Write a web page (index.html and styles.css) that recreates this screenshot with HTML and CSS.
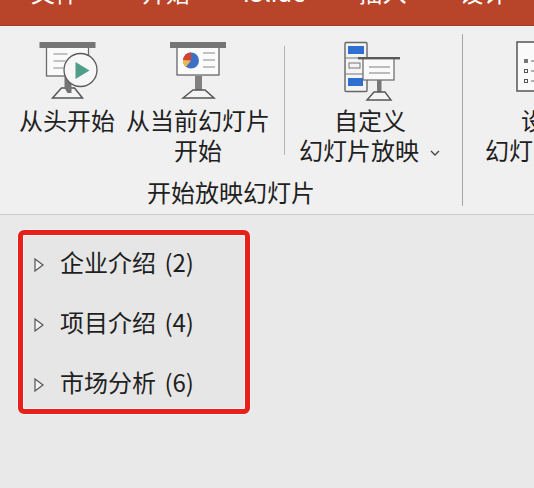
FILE: index.html
```html
<!DOCTYPE html>
<html lang="zh-CN">
<head>
<meta charset="utf-8">
<title>幻灯片放映</title>
<link rel="stylesheet" href="styles.css">
</head>
<body>
<header class="titlebar">
  <nav class="tabs">
    <span class="tab tab-first">文件</span>
    <span class="tab">开始</span>
    <span class="tab">iSlide</span>
    <span class="tab">插入</span>
    <span class="tab">设计</span>
  </nav>
</header>
<section class="ribbon">
  <div class="group group-start">
    <div class="commands">
      <div class="command cmd-a">
        <svg class="icon" viewBox="38.5 42 58 58">
          <rect x="47" y="47" width="42" height="29" fill="#fafafa" stroke="#6a6a6a" stroke-width="1.3"/>
          <rect x="40" y="42" width="56" height="6" fill="#757575"/>
          <path d="M54 54h14M54 61h12M54 68h10" stroke="#8a8a8a" stroke-width="1.2" fill="none"/>
          <path d="M53 98 L62 88 H75 L83 98 Z" fill="#f4f4f4" stroke="#555" stroke-width="1.5"/>
          <path d="M65 76 H72 V93 H68 L65 88 Z" fill="#737373"/>
          <circle cx="81" cy="70" r="16.5" fill="#f7f7f7" stroke="#5a5a5a" stroke-width="1.3"/>
          <path d="M76 62 L90 70.500 L76 79 Z" fill="#4f9e8a"/>
        </svg>
        <span class="line">从头开始</span>
      </div>
      <div class="command cmd-b">
        <svg class="icon" viewBox="169 42 58 58">
          <rect x="177" y="47" width="42" height="28" fill="#fbfbfb" stroke="#666" stroke-width="1.3"/>
          <rect x="170" y="42" width="56" height="6" fill="#757575"/>
          <circle cx="191" cy="60.500" r="8" fill="#3f6fc4"/>
          <path d="M191 60.500 L183 60 A8 8 0 0 1 191 52.500 Z" fill="#d9412c"/>
          <path d="M191 60.500 L183 60 A8 8 0 0 0 186 67 Z" fill="#eeb64f"/>
          <path d="M203 53h12M203 60h12M203 67h12" stroke="#8a8a8a" stroke-width="1.2" fill="none"/>
          <rect x="195" y="76" width="7" height="15" fill="#808080"/>
          <path d="M183 98 L193 90 H205 L214 98 Z" fill="#f4f4f4" stroke="#555" stroke-width="1.5"/>
        </svg>
        <span class="line">从当前幻灯片</span>
        <span class="line">开始</span>
      </div>
      <div class="separator"></div>
      <div class="command cmd-c">
        <svg class="icon icon-wide" viewBox="339 42 62 58">
          <rect x="345" y="42.500" width="22" height="49" rx="1" fill="#f4f4f4" stroke="#666" stroke-width="1.4"/>
          <path d="M345 58h22M345 74h22" stroke="#777" stroke-width="1"/>
          <rect x="348" y="46" width="16" height="8" fill="#2f6fd2"/>
          <rect x="349" y="63" width="11" height="5" fill="none" stroke="#777"/>
          <rect x="348" y="78" width="15" height="8" fill="#2f6fd2"/>
          <rect x="363" y="58" width="31" height="22" fill="#fafafa" stroke="#666" stroke-width="1.2"/>
          <rect x="358" y="57" width="42" height="2.400" fill="#5a5a5a"/>
          <path d="M369 67h21M369 73h21" stroke="#7d7d7d" stroke-width="1.1"/>
          <rect x="377" y="80" width="4.500" height="12" fill="#777"/>
          <path d="M367 100 L374 92 H385 L391 100 Z" fill="#f4f4f4" stroke="#555" stroke-width="1.4"/>
        </svg>
        <span class="line">自定义</span>
        <span class="line">幻灯片放映<svg class="chevron" viewBox="0 0 12 8"><path d="M2 2 L6 6 L10 2" fill="none" stroke="#444" stroke-width="1.3"/></svg></span>
      </div>
    </div>
    <div class="group-label">开始放映幻灯片</div>
  </div>
  <div class="group group-setup">
    <div class="command cmd-d">
      <svg class="icon" viewBox="516 42 58 58">
        <rect x="517" y="42" width="60" height="49" fill="#fafafa" stroke="#555" stroke-width="1.5"/>
        <rect x="524" y="59" width="4" height="4" fill="#777"/>
        <rect x="524.500" y="69.500" width="3" height="3" fill="none" stroke="#555"/>
        <rect x="524.500" y="79.500" width="3" height="3" fill="none" stroke="#555"/>
        <path d="M531 61h3M531 71h3M531 81h3" stroke="#666"/>
      </svg>
      <span class="line">设置</span>
      <span class="line">幻灯片放映</span>
    </div>
  </div>
</section>
<section class="sections">
  <ul class="section-list">
    <li class="section-row"><svg class="arrow" viewBox="0 0 10 14"><path d="M1 1 L9 7 L1 13 Z" fill="#f2f2f2" stroke="#555" stroke-width="1.2"/></svg><span>企业介绍 (2)</span></li>
    <li class="section-row"><svg class="arrow" viewBox="0 0 10 14"><path d="M1 1 L9 7 L1 13 Z" fill="#f2f2f2" stroke="#555" stroke-width="1.2"/></svg><span>项目介绍 (4)</span></li>
    <li class="section-row"><svg class="arrow" viewBox="0 0 10 14"><path d="M1 1 L9 7 L1 13 Z" fill="#f2f2f2" stroke="#555" stroke-width="1.2"/></svg><span>市场分析 (6)</span></li>
  </ul>
</section>
</body>
</html>
```

FILE: styles.css
```css
* { box-sizing: border-box; }

html, body {
  margin: 0;
  height: 100%;
  overflow: hidden;
}

body {
  width: 534px;
  height: 488px;
  background: #e9e9e9;
  color: #1f1f1f;
  font-family: "Noto Sans CJK SC", "Noto Sans", sans-serif;
  font-size: 24px;
  display: flex;
  flex-direction: column;
}

.titlebar {
  height: 26px;
  flex: none;
  background: #b8452a;
  border-bottom: 1px solid #a23d27;
  overflow: hidden;
}

.tabs {
  display: flex;
  gap: 53px;
  margin-top: -20px;
  padding-left: 31px;
  color: #fff;
  line-height: 24px;
}

.tab-first { margin-right: 10px; }

.ribbon {
  height: 189px;
  flex: none;
  display: flex;
  background: #f0f0f0;
  border-bottom: 1px solid #c9c9c9;
  padding-top: 8px;
  width: 620px;
}

.group {
  height: 172px;
  display: flex;
  flex-direction: column;
  padding-top: 8px;
}

.group-start {
  width: 463px;
  flex: none;
  border-right: 1px solid #a6a6a6;
}

.group-setup {
  padding-left: 22px;
  flex: none;
}

.commands {
  display: flex;
  height: 138px;
  padding-left: 19px;
}

.command {
  display: flex;
  flex-direction: column;
  align-items: center;
  flex: none;
}

.cmd-a { width: 96px; margin-right: 11px; }
.cmd-b { width: 144px; }
.cmd-c { width: 144px; }
.cmd-d { width: 120px; }

.icon {
  width: 58px;
  height: 58px;
  margin-bottom: 5px;
  flex: none;
  overflow: visible;
}

.icon-wide { width: 62px; }

.line {
  line-height: 30px;
  white-space: nowrap;
}

.chevron {
  width: 12px;
  height: 8px;
  margin-left: 10px;
  vertical-align: 3px;
}

.separator {
  width: 1px;
  height: 109px;
  margin: 4px 13px 0 14px;
  background: #b4b4b4;
  flex: none;
}

.group-label {
  text-align: center;
  line-height: 24px;
}

.sections {
  padding: 15px 0 0 18px;
}

.section-list {
  list-style: none;
  margin: 0;
  width: 232px;
  height: 184px;
  padding: 10px 0 0 11px;
  background: #e6e6e6;
  border: 5px solid #e8201a;
  border-radius: 6px;
  box-shadow: inset 0 0 0 1px #f4f4f4, 0 0 0 1px #f4f4f4;
  display: flex;
  flex-direction: column;
  gap: 26px;
}

.section-row {
  display: flex;
  align-items: center;
  gap: 16px;
  line-height: 34px;
  white-space: nowrap;
  word-spacing: 3px;
}

.arrow {
  width: 10px;
  height: 14px;
  margin-top: 6px;
  flex: none;
}
```
